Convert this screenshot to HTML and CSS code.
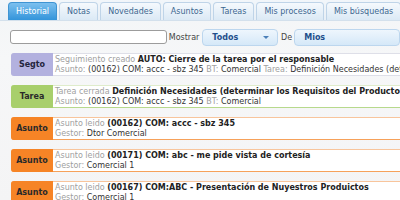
FILE: index.html
```html
<!DOCTYPE html>
<html>
<head>
<meta charset="utf-8">
<link rel="stylesheet" href="styles.css">
</head>
<body>
<div class="tabs">
  <div class="tab active">Historial</div>
  <div class="tab">Notas</div>
  <div class="tab">Novedades</div>
  <div class="tab">Asuntos</div>
  <div class="tab">Tareas</div>
  <div class="tab">Mis procesos</div>
  <div class="tab">Mis búsquedas</div>
</div>
<div class="filters">
  <div class="search"></div>
  <span class="lbl">Mostrar</span>
  <div class="select todos"><span>Todos</span><span class="arrow"></span></div>
  <span class="lbl de">De</span>
  <div class="select mios"><span>Mios</span></div>
</div>
<div class="list">
  <div class="row segto">
    <div class="badge">Segto</div>
    <div class="body">
      <div><span class="muted">Seguimiento creado</span> <b>AUTO: Cierre de la tarea por el responsable</b></div>
      <div><span class="muted">Asunto:</span> (00162) COM: accc - sbz 345 <span class="muted">BT:</span> Comercial <span class="muted">Tarea:</span> Definición Necesidades (determinar los Requisitos del Producto)</div>
    </div>
  </div>
  <div class="row tarea">
    <div class="badge">Tarea</div>
    <div class="body">
      <div><span class="muted">Tarea cerrada</span> <b>Definición Necesidades (determinar los Requisitos del Producto)</b></div>
      <div><span class="muted">Asunto:</span> (00162) COM: accc - sbz 345 <span class="muted">BT:</span> Comercial</div>
    </div>
  </div>
  <div class="row asunto">
    <div class="badge">Asunto</div>
    <div class="body">
      <div><span class="muted">Asunto leido</span> <b>(00162) COM: accc - sbz 345</b></div>
      <div><span class="muted">Gestor:</span> Dtor Comercial</div>
    </div>
  </div>
  <div class="row asunto">
    <div class="badge">Asunto</div>
    <div class="body">
      <div><span class="muted">Asunto leido</span> <b>(00171) COM: abc - me pide vista de cortesía</b></div>
      <div><span class="muted">Gestor:</span> Comercial 1</div>
    </div>
  </div>
  <div class="row asunto">
    <div class="badge">Asunto</div>
    <div class="body">
      <div><span class="muted">Asunto leido</span> <b>(00167) COM:ABC - Presentación de Nuyestros Produictos</b></div>
      <div><span class="muted">Gestor:</span> Comercial 1</div>
    </div>
  </div>
</div>
</body>
</html>
```
FILE: styles.css
```css
html, body {
  margin: 0;
  padding: 0;
}
body {
  width: 400px;
  height: 200px;
  overflow: hidden;
  font-family: "DejaVu Sans", Verdana, sans-serif;
  font-size: 8px;
  color: #333;
  background: linear-gradient(#f3f5f7, #f6f7f8 60px, #f4f4f5);
}
.tabs {
  display: flex;
  gap: 2px;
  padding: 2px 0 0 8px;
  height: 18px;
  border-bottom: 1px solid #d3e0ec;
  background: linear-gradient(#f2f6fa, #e8eff6);
}
.tab {
  height: 17px;
  line-height: 17px;
  padding: 0 7px;
  border: 1px solid #bfd4e8;
  border-bottom: none;
  border-radius: 4px 4px 0 0;
  background: linear-gradient(#f5f9fd, #dbe9f5);
  color: #3d6790;
  white-space: nowrap;
}
.tab.active {
  background: linear-gradient(#7cc0ef, #3394da);
  border-color: #3e94d3;
  color: #fff;
}
.filters {
  display: flex;
  align-items: center;
  padding: 7px 0 0 10px;
  height: 18px;
  white-space: nowrap;
}
.search {
  width: 180px;
  height: 12px;
  border: 1px solid #9c9c9c;
  border-radius: 3px;
  background: #fff;
  margin-right: 2px;
}
.lbl {
  color: #444;
}
.select {
  display: flex;
  align-items: center;
  justify-content: space-between;
  box-sizing: border-box;
  height: 17px;
  padding: 0 8px 0 9px;
  border: 1px solid #bcd6ee;
  border-radius: 4px;
  background: linear-gradient(#eef6fd, #d5e8f8);
  color: #1e4f8c;
  font-weight: bold;
}
.todos {
  width: 85px;
  margin-left: 3px;
}
.de {
  margin: 0 2px 0 3px;
}
.mios {
  width: 120px;
}
.arrow {
  width: 0;
  height: 0;
  border-left: 3px solid transparent;
  border-right: 3px solid transparent;
  border-top: 3px solid #4a7fb8;
}
.list {
  display: flex;
  flex-direction: column;
  gap: 9px;
  padding: 7px 0 0 11px;
  width: 620px;
}
.row {
  display: flex;
  height: 23px;
  box-sizing: border-box;
  border: 1px solid #dcdce6;
  border-radius: 3px;
  background: #fff;
  white-space: nowrap;
}
.badge {
  width: 42px;
  flex: none;
  margin: -1px 0 -1px -1px;
  border-radius: 3px 0 0 3px;
  display: flex;
  align-items: center;
  justify-content: center;
  font-weight: bold;
  color: #2a2a2a;
}
.body {
  padding: 1px 0 0 2px;
  line-height: 9.5px;
  color: #333;
}
.body b {
  color: #222;
}
.muted {
  color: #a0a0a0;
}
.segto .badge {
  background: #b3b1df;
  color: #25253d;
}
.segto {
  border-color: #dedfe8;
}
.tarea .badge {
  background: #a8cf6c;
}
.tarea {
  border-color: #dfeccb #dfeccb #b7d98c;
}
.asunto .badge {
  background: #f68426;
}
.asunto {
  border-color: #f8c59c #f8c59c #f6a15a;
}
```
